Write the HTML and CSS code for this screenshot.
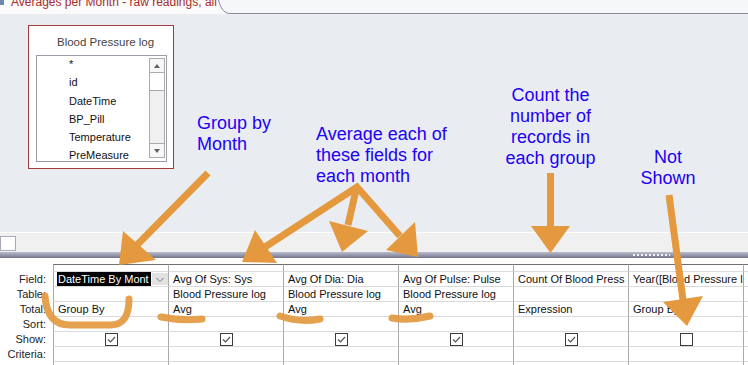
FILE: index.html
```html
<!DOCTYPE html>
<html lang="en">
  <head>
    <meta charset="UTF-8" />
    <title>Averages per Month - raw readings, all</title>
    <link rel="stylesheet" href="styles.css">
  </head>
  <body>
    <div class="tabbar">
      <div class="tab">
        <span class="tab-icon"></span>
        <span class="tab-title">Averages per Month - raw readings, all</span>
      </div>
      <svg class="tab-edge" width="12" height="14" viewBox="0 0 12 14">
        <path d="M0.5 0 C2 6, 5 13.5, 12 13.5" fill="none" stroke="#8b8b9b" />
      </svg>
      <div class="tab-rest"></div>
    </div>

    <div class="design">
      <div class="tablebox">
        <div class="tablebox-title">Blood Pressure log</div>
        <div class="fieldlist">
          <ul class="fields">
            <li>*</li>
            <li>id</li>
            <li>DateTime</li>
            <li>BP_Pill</li>
            <li>Temperature</li>
            <li>PreMeasure</li>
          </ul>
          <div class="scroll">
            <div class="scroll-btn up"><span class="tri-up"></span></div>
            <div class="scroll-thumb"></div>
            <div class="scroll-track"></div>
            <div class="scroll-btn down"><span class="tri-down"></span></div>
          </div>
        </div>
      </div>
    </div>

    <div class="splitter"><div class="split-box"></div></div>
    <div class="splitbar"><span class="grip"></span></div>

    <div class="qbe">
      <div class="grid">
        <!-- header row -->
        <div class="lbl"></div>
        <div class="c hd"></div><div class="c hd"></div><div class="c hd"></div><div class="c hd"></div>
        <div class="c hd"></div><div class="c hd"></div><div class="c hd"></div>

        <!-- Field -->
        <div class="lbl">Field:</div>
        <div class="c sel-cell">
          <span class="sel">DateTime By Mont</span>
          <span class="drop">
            <svg width="16" height="12" viewBox="0 0 16 12"><path d="M4.5 5 L8 8.5 L11.5 5" fill="none" stroke="#7a7a7a" stroke-width="1" /></svg>
          </span>
        </div>
        <div class="c">Avg Of Sys: Sys</div>
        <div class="c">Avg Of Dia: Dia</div>
        <div class="c">Avg Of Pulse: Pulse</div>
        <div class="c">Count Of Blood Press</div>
        <div class="c">Year([Blood Pressure l</div>
        <div class="c"></div>

        <!-- Table -->
        <div class="lbl">Table:</div>
        <div class="c"></div>
        <div class="c">Blood Pressure log</div>
        <div class="c">Blood Pressure log</div>
        <div class="c">Blood Pressure log</div>
        <div class="c"></div>
        <div class="c"></div>
        <div class="c"></div>

        <!-- Total -->
        <div class="lbl">Total:</div>
        <div class="c">Group By</div>
        <div class="c">Avg</div>
        <div class="c">Avg</div>
        <div class="c">Avg</div>
        <div class="c">Expression</div>
        <div class="c">Group By</div>
        <div class="c"></div>

        <!-- Sort -->
        <div class="lbl">Sort:</div>
        <div class="c"></div><div class="c"></div><div class="c"></div><div class="c"></div>
        <div class="c"></div><div class="c"></div><div class="c"></div>

        <!-- Show -->
        <div class="lbl">Show:</div>
        <div class="c"><span class="chk"><svg width="11" height="11" viewBox="0 0 11 11"><path d="M2 5.5 L4.5 8 L9 3" /></svg></span></div>
        <div class="c"><span class="chk"><svg width="11" height="11" viewBox="0 0 11 11"><path d="M2 5.5 L4.5 8 L9 3" /></svg></span></div>
        <div class="c"><span class="chk"><svg width="11" height="11" viewBox="0 0 11 11"><path d="M2 5.5 L4.5 8 L9 3" /></svg></span></div>
        <div class="c"><span class="chk"><svg width="11" height="11" viewBox="0 0 11 11"><path d="M2 5.5 L4.5 8 L9 3" /></svg></span></div>
        <div class="c"><span class="chk"><svg width="11" height="11" viewBox="0 0 11 11"><path d="M2 5.5 L4.5 8 L9 3" /></svg></span></div>
        <div class="c"><span class="chk"></span></div>
        <div class="c"></div>

        <!-- Criteria -->
        <div class="lbl">Criteria:</div>
        <div class="c"></div><div class="c"></div><div class="c"></div><div class="c"></div>
        <div class="c"></div><div class="c"></div><div class="c"></div>

        <!-- or -->
        <div class="lbl"></div>
        <div class="c"></div><div class="c"></div><div class="c"></div><div class="c"></div>
        <div class="c"></div><div class="c"></div><div class="c"></div>
      </div>
    </div>

    <div class="notes">
      <svg width="748" height="365" viewBox="0 0 748 365">
        <g class="arrows">
          <line x1="208" y1="173" x2="137" y2="245" />
          <polygon points="119,265 123,231 156,260" />

          <polyline points="265,247 357,187 400,236" />
          <polygon points="242,262 255,230 277,263" />
          <line x1="356" y1="190" x2="348" y2="225" />
          <polygon points="342,252 329,221 368,231" />
          <polygon points="418,257 386,250 415,222" />

          <line x1="550.5" y1="173" x2="550.5" y2="228" />
          <polygon points="550.5,253 531,226 570,226" />

          <line x1="669" y1="195" x2="683" y2="300" />
          <polygon points="687,326 663,302 703,296" />
        </g>
        <g class="marks">
          <path d="M45 296 C46 312, 52 325, 70 325 L110 325 C122 325, 129 318, 129 299" />
          <path d="M161 317 Q182 321 202 319" />
          <path d="M280 316 Q300 323 320 319" />
          <path d="M392 318 Q410 321 430 316" />
        </g>
      </svg>
      <div class="note note-group">Group by<br>Month</div>
      <div class="note note-avg">Average each of<br>these fields for<br>each month</div>
      <div class="note note-count">Count the<br>number of<br>records in<br>each group</div>
      <div class="note note-not">Not<br>Shown</div>
    </div>
  </body>
</html>
```

FILE: styles.css
```css
body {
  margin: 0;
  width: 748px;
  height: 365px;
  overflow: hidden;
  position: relative;
  font-family: "Liberation Sans", Arial, sans-serif;
  font-size: 11px;
  color: #1b1b1b;
  background: #fff;
}

/* document tab */
.tabbar {
  display: flex;
  height: 14px;
  background: #f6f7f8;
}
.tab {
  display: flex;
  width: 218px;
  background: #fbfbfb;
  overflow: hidden;
}
.tab-icon {
  width: 4px;
  height: 5px;
  background: #7088b0;
}
.tab-title {
  margin: -4px 0 0 7px;
  font-size: 12px;
  line-height: 12px;
  color: #a82a2a;
  white-space: nowrap;
}
.tab-edge {
  display: block;
}
.tab-rest {
  flex: 1;
  box-sizing: border-box;
  border-bottom: 1px solid #8b8b9b;
}

/* design surface */
.design {
  position: relative;
  height: 218px;
  background: #e9edf1;
}
.tablebox {
  position: absolute;
  left: 28px;
  top: 11px;
  width: 146px;
  height: 144px;
  box-sizing: border-box;
  padding: 8px 0 0 7px;
  border: 1px solid #a63a3a;
  background: #fff;
}
.tablebox-title {
  padding-left: 21px;
  font-size: 11.5px;
  line-height: 16px;
  color: #444;
}
.fieldlist {
  display: flex;
  width: 131px;
  height: 107px;
  margin-top: 5px;
  box-sizing: border-box;
  border: 1px solid #9c9cab;
}
.fields {
  flex: 1;
  margin: -1px 0 0;
  padding: 0 0 0 32px;
  list-style: none;
  overflow: hidden;
}
.fields li {
  height: 18.3px;
  line-height: 18.3px;
  color: #111;
}
.scroll {
  display: flex;
  flex-direction: column;
  width: 16px;
  margin: 2px 1px 3px 0;
  box-sizing: border-box;
  border: 1px solid #ababab;
  background: #f0f0f0;
}
.scroll-btn {
  display: flex;
  align-items: center;
  justify-content: center;
  height: 13px;
  background: #f7f7f7;
}
.scroll-btn.up {
  border-bottom: 1px solid #ababab;
}
.scroll-btn.down {
  border-top: 1px solid #ababab;
}
.scroll-thumb {
  height: 17px;
  background: #fff;
  border-bottom: 1px solid #ababab;
}
.scroll-track {
  flex: 1;
}
.tri-up {
  border-left: 3.5px solid transparent;
  border-right: 3.5px solid transparent;
  border-bottom: 4px solid #606060;
}
.tri-down {
  border-left: 3.5px solid transparent;
  border-right: 3.5px solid transparent;
  border-top: 4px solid #606060;
}

/* splitter */
.splitter {
  height: 20px;
  box-sizing: border-box;
  padding-top: 3px;
  border-top: 1px solid #fff;
  background: #f0f0f0;
}
.split-box {
  width: 16px;
  height: 15px;
  box-sizing: border-box;
  border: 1px solid #a9a9bb;
  background: #fff;
}
.splitbar {
  display: flex;
  align-items: center;
  height: 6px;
  background: linear-gradient(#bcbccd, #74748d);
}
.grip {
  width: 37px;
  height: 2px;
  margin-left: 633px;
  background: repeating-linear-gradient(90deg, #f2f2f7 0 2px, transparent 2px 4px);
}

/* query grid */
.qbe {
  padding-top: 6px;
}
.grid {
  display: grid;
  grid-template-columns: 53px repeat(7, 115px);
  grid-template-rows: 8px repeat(7, 15px);
}
.lbl {
  padding-right: 7px;
  text-align: right;
  line-height: 14px;
  color: #1e1e1e;
}
.c {
  box-sizing: border-box;
  padding: 0 4px;
  border-left: 1px solid #a9a9a9;
  border-bottom: 1px solid #dadada;
  line-height: 14px;
  white-space: nowrap;
  overflow: hidden;
  color: #111;
}
.c.hd {
  border-top: 1px solid #707070;
}
.sel-cell {
  display: flex;
  padding: 0 0 0 3px;
}
.sel {
  width: 94px;
  flex: none;
  padding-left: 1px;
  box-sizing: border-box;
  background: #000;
  color: #fff;
  overflow: hidden;
}
.drop {
  display: flex;
  align-items: center;
  width: 16px;
  height: 12px;
  margin: 1px 0 0 1px;
  background: #e2e2e2;
}
.chk {
  display: block;
  width: 13px;
  height: 13px;
  margin: 1px auto 0;
  box-sizing: border-box;
  border: 1px solid #3c3c3c;
}
.chk svg {
  display: block;
}
.chk path {
  fill: none;
  stroke: #555;
  stroke-width: 1.2;
}

/* annotations */
.notes {
  position: absolute;
  left: 0;
  top: 0;
  width: 748px;
  height: 365px;
  pointer-events: none;
}
.notes svg {
  position: absolute;
  left: 0;
  top: 0;
}
.arrows line,
.arrows polyline {
  fill: none;
  stroke: #e4993f;
  stroke-width: 7;
}
.arrows polygon {
  fill: #e4993f;
}
.marks path {
  fill: none;
  stroke: #e4993f;
  stroke-width: 7;
  stroke-linecap: round;
  opacity: 0.92;
}
.note {
  position: absolute;
  font-size: 18px;
  line-height: 21px;
  color: #2200f5;
  white-space: nowrap;
}
.note-group {
  left: 197px;
  top: 113px;
}
.note-avg {
  left: 316px;
  top: 124px;
}
.note-count {
  left: 500px;
  top: 85px;
  width: 101px;
  text-align: center;
}
.note-not {
  left: 618px;
  top: 147px;
  width: 100px;
  text-align: center;
}
```
